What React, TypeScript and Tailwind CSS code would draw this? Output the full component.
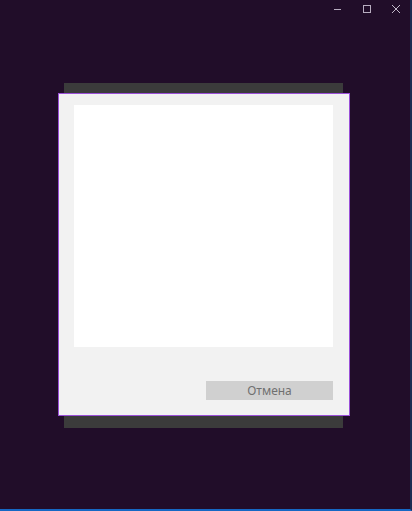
import React from 'react';

function TitleButtons() {
  return (
    <div className="flex h-[18px] justify-end">
      <button aria-label="Minimize" className="flex w-[29px] items-center justify-center">
        <svg width="7" height="1" viewBox="0 0 7 1">
          <rect width="7" height="1" fill="#b8adc0" />
        </svg>
      </button>
      <button aria-label="Maximize" className="flex w-[29px] items-center justify-center">
        <svg width="8" height="8" viewBox="0 0 8 8">
          <rect x="0.5" y="0.5" width="7" height="7" fill="none" stroke="#b8adc0" strokeWidth="1" />
        </svg>
      </button>
      <button aria-label="Close" className="flex w-[29px] items-center justify-center">
        <svg width="8" height="8" viewBox="0 0 8 8">
          <path d="M0 0L8 8M8 0L0 8" stroke="#c2b8c9" strokeWidth="1" />
        </svg>
      </button>
    </div>
  );
}

export default function App() {
  return (
    <div className="flex h-[511px] w-[412px] flex-col border-b-2 border-r-2 border-b-[#1668c4] border-r-[#1b2d52] bg-[#210d29] font-['Noto_Sans',sans-serif]">
      <TitleButtons />
      <div className="pl-[58px] pt-[75px]">
        <div className="relative w-[292px]">
          {/* shadow layer behind the dialog */}
          <div className="absolute left-[6px] top-[-10px] h-[345px] w-[279px] bg-[#3b3b3b]" />
          <div className="relative flex h-[323px] flex-col border border-[#9a4fd8] bg-[#f2f2f2] pl-[15px] pr-[16px] pt-[11px]">
            <div className="h-[242px] w-[259px] bg-white" />
            <div className="mt-[34px] flex justify-end">
              <button className="flex h-[19px] w-[127px] items-center justify-center bg-[#d0d0d0] text-[12px] leading-none text-[#707070]">
                Отмена
              </button>
            </div>
          </div>
        </div>
      </div>
    </div>
  );
}
